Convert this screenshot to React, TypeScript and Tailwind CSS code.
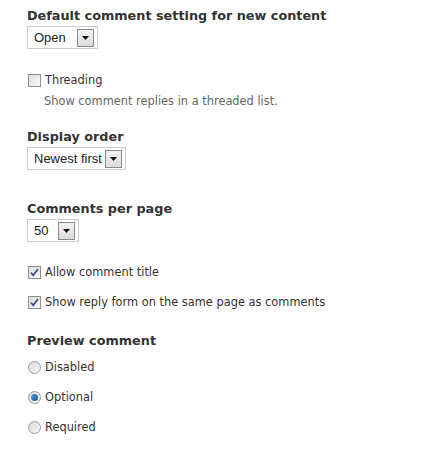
function Select({ value, width }: { value: string; width: string }) {
  return (
    <div className={`flex h-[23px] items-center justify-between border border-[#cccccc] bg-white pl-[6px] pr-[3px] ${width}`}>
      <span className="font-['Liberation_Sans',Arial,sans-serif] text-[13px] leading-[16px] text-[#222]">{value}</span>
      <span className="flex h-[18px] w-[17px] items-center justify-center border border-[#8a8a8a] bg-gradient-to-b from-[#f4f4f4] to-[#dcdcdc]">
        <svg width="7" height="4" viewBox="0 0 7 4">
          <path d="M0 0h7L3.5 4z" fill="#111" />
        </svg>
      </span>
    </div>
  );
}

function Check({ checked }: { checked?: boolean }) {
  return (
    <span className="flex h-[13px] w-[13px] shrink-0 items-center justify-center border border-[#8f8f8f] bg-gradient-to-br from-[#dcdcdc] to-[#fafafa]">
      {checked && (
        <svg width="9" height="9" viewBox="0 0 9 9">
          <path d="M1 4.5l2.2 2.7L8 1" stroke="#3b4f8f" strokeWidth="1.8" fill="none" />
        </svg>
      )}
    </span>
  );
}

function Radio({ checked }: { checked?: boolean }) {
  return (
    <span className="flex h-[13px] w-[13px] shrink-0 items-center justify-center rounded-full border border-[#9a9a9a] bg-gradient-to-br from-[#d8d8d8] to-[#f8f8f8]">
      {checked && <span className="h-[7px] w-[7px] rounded-full bg-gradient-to-br from-[#5aa0d8] to-[#1b4f86]" />}
    </span>
  );
}

function Heading({ children }: { children: string }) {
  return <h2 className="h-[16px] text-[12.8px] font-bold leading-[16px] text-[#333]">{children}</h2>;
}

function Row({ children }: { children: React.ReactNode }) {
  return <div className="flex h-[16px] items-center gap-[4px] pl-[1px] leading-[16px]">{children}</div>;
}

export default function App() {
  return (
    <div className="h-[467px] w-[438px] bg-white pl-[27px] pt-[8px] font-['DejaVu_Sans',Verdana,sans-serif] text-[11.4px] leading-[16px] text-[#333]">
      <Heading>Default comment setting for new content</Heading>
      <div className="mt-[2px]">
        <Select value="Open" width="w-[71px]" />
      </div>

      <div className="mt-[23px]">
        <Row>
          <Check />
          <span>Threading</span>
        </Row>
      </div>
      <p className="mt-[6px] h-[14px] pl-[17px] text-[11.4px] leading-[14px] text-[#666]">
        Show comment replies in a threaded list.
      </p>

      <div className="mt-[21px]">
        <Heading>Display order</Heading>
      </div>
      <div className="mt-[2px]">
        <Select value="Newest first" width="w-[99px]" />
      </div>

      <div className="mt-[31px]">
        <Heading>Comments per page</Heading>
      </div>
      <div className="mt-[2px]">
        <Select value="50" width="w-[52px]" />
      </div>

      <div className="mt-[22px] flex flex-col gap-[14px]">
        <Row>
          <Check checked />
          <span>Allow comment title</span>
        </Row>
        <Row>
          <Check checked />
          <span>Show reply form on the same page as comments</span>
        </Row>
      </div>

      <div className="mt-[23px]">
        <Heading>Preview comment</Heading>
      </div>
      <div className="mt-[10px] flex flex-col gap-[14px]">
        <Row>
          <Radio />
          <span>Disabled</span>
        </Row>
        <Row>
          <Radio checked />
          <span>Optional</span>
        </Row>
        <Row>
          <Radio />
          <span>Required</span>
        </Row>
      </div>
    </div>
  );
}
